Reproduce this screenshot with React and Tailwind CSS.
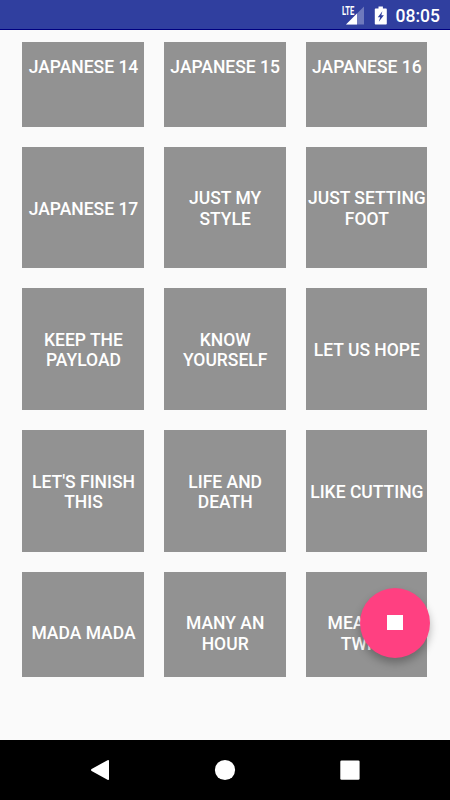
const sounds = [
  'Japanese 14', 'Japanese 15', 'Japanese 16',
  'Japanese 17', 'Just my style', 'Just setting foot',
  'Keep the payload', 'Know yourself', 'Let us hope',
  "Let's finish this", 'Life and death', 'Like cutting',
  'Mada mada', 'Many an hour', 'Meaning twice',
];

export default function App() {
  return (
    <div className="relative flex h-[800px] w-[450px] flex-col overflow-hidden bg-[#fafafa] font-['Roboto',sans-serif]">
      <StatusBar />
      <main className="flex-1 px-[22.4px] pt-[12.4px]">
        <div className="h-[635px] overflow-hidden">
          {/* list is scrolled part way through the first row */}
          <div className="-mt-[37.35px] grid grid-cols-[repeat(3,121.6px)] auto-rows-[121.5px] gap-x-[20.1px] gap-y-[20.17px]">
            {sounds.map((name) => <SoundTile key={name} name={name} />)}
          </div>
        </div>
      </main>
      <StopButton />
      <NavBar />
    </div>
  );
}

function StatusBar() {
  return (
    <header className="flex h-[30px] shrink-0 items-center justify-end border-b border-[#000080] bg-[#303f9f] pr-[10px] text-white">
      <svg className="h-[30px] w-[54px]" viewBox="0 0 54 30" aria-hidden="true">
        <text x="1" y="14.5" fontSize="12" fontWeight="700" fill="#fff" textLength="12.2" lengthAdjust="spacingAndGlyphs">LTE</text>
        <path d="M23 6.500v18H5z" fill="#fff" fillOpacity=".3" />
        <path d="M16 13.500v11H5z" fill="#fff" />
        <path d="M37.500 6.500h4.400v2h2.900c.6 0 1 .4 1 1v14c0 .6-.4 1-1 1h-10c-.6 0-1-.4-1-1v-14c0-.6.4-1 1-1h2.700z" fill="#fff" />
        <path d="M41.400 11.200 36.800 17.200h2.400l-1.400 4.600 5.100-6.500h-2.600z" fill="#303f9f" />
      </svg>
      <span className="w-[45px] pt-[4px] text-right text-[17.5px] leading-none font-medium">08:05</span>
    </header>
  );
}

function SoundTile({ name }) {
  return (
    <button className="flex items-center justify-center bg-[#929292] pt-[2.6px] pl-[0.6px] text-center text-[17.5px] leading-[20.5px] font-medium text-white uppercase">
      {name}
    </button>
  );
}

function StopButton() {
  return (
    <button
      aria-label="Stop"
      className="absolute top-[587.5px] left-[360px] flex size-[70px] items-center justify-center rounded-full bg-[#ff4081] shadow-[0_5px_9px_rgba(0,0,0,0.28)]"
    >
      <span className="size-[15.5px] bg-white" />
    </button>
  );
}

function NavBar() {
  return (
    <nav className="flex h-[60px] shrink-0 items-center justify-center bg-black">
      <svg className="h-[60px] w-[330px]" viewBox="0 0 330 60" fill="#fff" aria-hidden="true">
        <path d="M47.500 20.200Q49 19.300 49 21v18q0 1.700-1.500.8L31.600 31q-1.200-1 0-2z" />
        <circle cx="165" cy="30" r="10.100" />
        <rect x="280.300" y="20.400" width="19.300" height="19.300" rx="1.300" />
      </svg>
    </nav>
  );
}
